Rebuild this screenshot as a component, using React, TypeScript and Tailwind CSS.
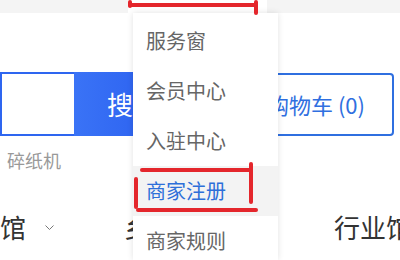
import { ReactNode } from "react";

const font = { fontFamily: '"Noto Sans CJK SC", "Noto Sans", sans-serif' };

function Chevron() {
  return (
    <svg width="9" height="5" viewBox="0 0 9 5" className="ml-[19px] shrink-0">
      <polyline points="0.5,0.5 4.5,4.5 8.5,0.5" fill="none" stroke="#777" strokeWidth="1" />
    </svg>
  );
}

function MenuItem({ children, active }: { children: ReactNode; active?: boolean }) {
  return (
    <div
      className={`flex h-[50px] items-center pl-[13px] text-[20px] ${
        active ? "bg-[#f3f3f3] text-[#2d6fd9]" : "text-[#666]"
      }`}
    >
      {children}
    </div>
  );
}

// red marker strokes drawn on top of the screenshot
function Mark({ className }: { className: string }) {
  return <div className={`absolute rounded-full bg-[#e4262c] ${className}`} />;
}

export default function App() {
  return (
    <div className="relative h-[260px] w-[400px] overflow-hidden bg-white" style={font}>
      <div className="h-[13px] bg-[#f4f4f4]" />

      <div className="mt-[59px] flex h-[64px]">
        <div className="w-[74px] shrink-0 border-2 border-r-0 border-[#2e66f0]" />
        <button className="w-[96px] shrink-0 bg-linear-to-r from-[#3a73f6] to-[#2a5eef] pl-[33px] text-left text-[26px] leading-none whitespace-nowrap text-white">
          搜索
        </button>
        <div className="ml-[68px] mt-[1px] flex w-[156px] shrink-0 items-center justify-center rounded-[4px] border-2 border-[#2f6fe0] text-[22px] whitespace-nowrap text-[#2f6fe0]">
          购物车 (0)
        </div>
      </div>

      <div className="mt-[12px] pl-[7px] text-[18px] leading-[24px] text-[#999]">碎纸机</div>

      <div className="ml-[-52px] mt-[37px] flex w-max items-center text-[26px] leading-[36px] whitespace-nowrap text-[#333]">
        <div className="flex items-center">
          <span>品牌馆</span>
          <Chevron />
        </div>
        <div className="ml-[70px] flex w-[140px] items-center">
          <span>乡村特色</span>
        </div>
        <div className="ml-[70px] flex items-center">
          <span>行业馆</span>
        </div>
      </div>

      <div className="absolute left-[128px] top-0 h-[13px] w-[139px] bg-white" />
      <div className="absolute bottom-0 left-[133px] top-[13px] w-[145px] bg-white pt-[3px] shadow-[0_0_6px_rgba(0,0,0,0.12)]">
        <MenuItem>服务窗</MenuItem>
        <MenuItem>会员中心</MenuItem>
        <MenuItem>入驻中心</MenuItem>
        <MenuItem active>商家注册</MenuItem>
        <MenuItem>商家规则</MenuItem>
      </div>

      <Mark className="left-[128px] top-0 h-[8px] w-[4px]" />
      <Mark className="left-[128px] top-[3px] h-[4px] w-[130px]" />
      <Mark className="left-[254px] top-0 h-[15px] w-[4px]" />

      <Mark className="left-[140px] top-[168px] h-[4px] w-[113px]" />
      <Mark className="left-[134px] top-[177px] h-[32px] w-[4px]" />
      <Mark className="left-[249px] top-[162px] h-[42px] w-[4px]" />
      <Mark className="left-[136px] top-[208px] h-[4px] w-[122px]" />
    </div>
  );
}
